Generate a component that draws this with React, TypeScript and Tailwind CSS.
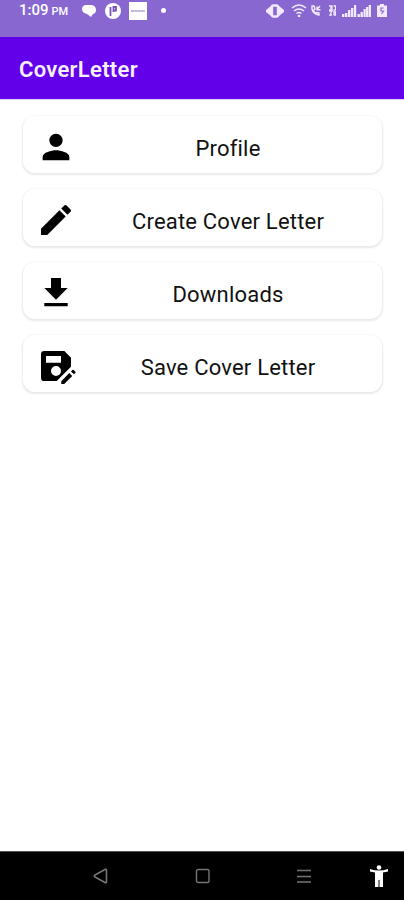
import type { ReactNode } from 'react'

interface MenuCardProps {
  label: string
  children: ReactNode
}

function MenuCard({ label, children }: MenuCardProps) {
  return (
    <button className="flex h-[57px] w-full items-center rounded-[12px] bg-white pl-[13px] pt-[5px] shadow-[0_1px_2px_1px_rgba(0,0,0,0.09)]">
      <svg viewBox="0 0 24 24" className="size-10 shrink-0" fill="#000">
        {children}
      </svg>
      <span className="flex-1 pr-0.5 pt-[3px] text-center text-[22px] leading-7 tracking-[0.2px] text-[#111]">{label}</span>
    </button>
  )
}

function StatusBar() {
  return (
    <div className="flex h-[37px] items-start justify-between bg-[#8867d0] pl-[19px] pr-[17px] text-white">
      <div className="flex h-[21px] items-center">
        <div className="flex w-[51px] items-baseline gap-[3px] whitespace-nowrap font-medium">
          <span className="text-[15px] leading-5">1:09</span>
          <span className="text-[11px] leading-5">PM</span>
        </div>
        <svg viewBox="0 0 14 14" className="ml-3 h-3.5 w-3.5" fill="currentColor">
          <path d="M3 1h7q4 1 4 5 0 3-3 4l-2 3-4-3Q0 9 0 5 0 2 3 1Z" />
        </svg>
        <svg viewBox="0 0 16 16" className="ml-[9px] size-4">
          <circle cx="8" cy="8" r="8" fill="currentColor" />
          <path d="M5.500 13V4M8.500 3v6M8.500 4H11v3.500H8.500" fill="none" stroke="#7654b8" strokeWidth="1.800" />
        </svg>
        <svg viewBox="0 0 18 18" className="ml-2 size-[18px]">
          <path d="M0 0h18v18H0Z" fill="currentColor" />
          <path d="M2 9h14" stroke="#8970b5" strokeWidth="1.200" strokeDasharray="3 .3" />
        </svg>
        <span className="ml-[14px] size-[5px] rounded-full bg-white" />
      </div>
      <div className="flex h-[21px] items-center text-[#f2e9ff]">
        <svg viewBox="0 0 18 14" className="h-3.5 w-[18px]" fill="currentColor">
          <path d="M5 2v10L0 8V6ZM13 2v10l5-4V6Z" />
          <rect x="6" y="1.500" width="6" height="11" rx="1.500" fill="none" stroke="currentColor" strokeWidth="2.400" />
        </svg>
        <svg viewBox="0 0 16 13" className="ml-[7px] h-[13px] w-4" fill="none" stroke="currentColor" strokeWidth="1.500">
          <path d="M1 4q7-6 14 0M3 7q5-4 10 0M5.500 9.500q2.500-2 5 0" />
          <circle cx="8" cy="12" r=".6" fill="currentColor" />
        </svg>
        <svg viewBox="0 0 10 11" className="ml-1 h-[11px] w-2.5" fill="none" stroke="currentColor" strokeWidth="1.400">
          <path d="M1 1v3q1 5 7 6V8L6 7.500 5 8.500Q3 7 2.500 5L4 4 3 1ZM9 1 6 4.500M6 1.500v3.300h3.500" />
        </svg>
        <svg viewBox="0 0 7 11" className="ml-2 h-[11px] w-[7px]" fill="none" stroke="currentColor" strokeWidth="1.300">
          <path d="M0 1h3v4H0M3 3H1M4.500 1H6.500v4h-2M0 6h3L1 10h2M5 6v4.500M5 7h1.500v3H5" />
        </svg>
        <svg viewBox="0 0 29 12" className="ml-1.5 h-3 w-[29px]" fill="currentColor">
          <path d="M0 9h2.400v3H0ZM3 8h2.400v4H3ZM6 5h2.400v7H6ZM9 3h2.400v9H9ZM12 0h2.200v12H12ZM15.500 9h2.400v3h-2.400ZM18.500 7h2.400v5h-2.400ZM21.500 4h2.200v8h-2.200ZM24 2h2.300v10H24ZM26.700 0H29v12h-2.300Z" />
        </svg>
        <svg viewBox="0 0 10 13" className="ml-1.5 h-[13px] w-2.5">
          <path d="M3 0h4v1.500h3V13H0V1.500h3Z" fill="currentColor" />
          <path d="M6.500 4H4v3h2.500L4.500 10" fill="none" stroke="#8867d0" strokeWidth="1.200" />
        </svg>
      </div>
    </div>
  )
}

function NavigationBar() {
  return (
    <nav className="flex h-[49px] items-center border-t border-[#555] bg-black pl-[92px] text-[#747474]">
      <svg viewBox="0 0 16 16" className="size-4" fill="none" stroke="currentColor" strokeWidth="1.600" strokeLinejoin="round">
        <path d="M14.500 2v12q0 1-1.500.5L3 9Q1.500 8 3 7l10-5.500q1.500-.5 1.500.5Z" />
      </svg>
      <svg viewBox="0 0 16 16" className="ml-[87px] size-4" fill="none" stroke="currentColor" strokeWidth="1.400">
        <rect x="1.500" y="1.500" width="12.500" height="13" rx="1.500" />
      </svg>
      <svg viewBox="0 0 16 16" className="ml-[85px] size-4" fill="none" stroke="currentColor" strokeWidth="1.700">
        <path d="M1 2.500h14M1 8.500h14M1 14h14" />
      </svg>
      <svg viewBox="0 0 20 22" className="ml-[57px] h-[22px] w-5" fill="#fff">
        <circle cx="10" cy="2.500" r="2.300" />
        <path d="M1 4q9 3 18 0v2.500l-5 1V22h-3.500v-7h-1v7H6V7.500l-5-1Z" />
      </svg>
    </nav>
  )
}

export default function App() {
  return (
    <div className="flex h-[900px] w-full flex-col bg-white font-['Roboto',sans-serif]">
      <StatusBar />
      <header className="flex h-[63px] items-center border-b border-[#dfcff8] bg-[#6200ea] pl-[19px] pt-[3px]">
        <h1 className="text-[22px] font-semibold leading-7 tracking-[0.3px] text-[#f7f0ff]">CoverLetter</h1>
      </header>
      <main className="flex flex-1 flex-col gap-4 pl-[23px] pr-[22px] pt-4">
        <MenuCard label="Profile">
          <path d="M12 12c2.210 0 4-1.790 4-4s-1.790-4-4-4-4 1.790-4 4 1.790 4 4 4zm0 2c-2.670 0-8 1.340-8 4v2h16v-2c0-2.660-5.330-4-8-4z" />
        </MenuCard>
        <MenuCard label="Create Cover Letter">
          <path d="M3 17.250V21h3.750L17.810 9.940l-3.750-3.750L3 17.250zM20.710 7.040a1 1 0 0 0 0-1.410l-2.340-2.340a1 1 0 0 0-1.410 0l-1.830 1.830 3.750 3.750 1.830-1.830z" />
        </MenuCard>
        <MenuCard label="Downloads">
          <path d="M19 9h-4V3H9v6H5l7 7 7-7zM5 18v2h14v-2H5z" />
        </MenuCard>
        <MenuCard label="Save Cover Letter">
          <path
            fillRule="evenodd"
            d="M21 12.400V7l-4-4H5a2 2 0 0 0-2 2v14a2 2 0 0 0 2 2h7.400l8.600-8.600zM12 12a3 3 0 1 1 0 6 3 3 0 0 1 0-6zM6 6h9v4H6V6z"
          />
          <path d="M19.990 16.250l1.770 1.770-4.840 4.840h-1.770v-1.770l4.840-4.840zM23.610 16.160l-.85.850-1.770-1.770.85-.850a.5.5 0 0 1 .71 0l1.060 1.060a.5.5 0 0 1 0 .710z" />
        </MenuCard>
      </main>
      <NavigationBar />
    </div>
  )
}
